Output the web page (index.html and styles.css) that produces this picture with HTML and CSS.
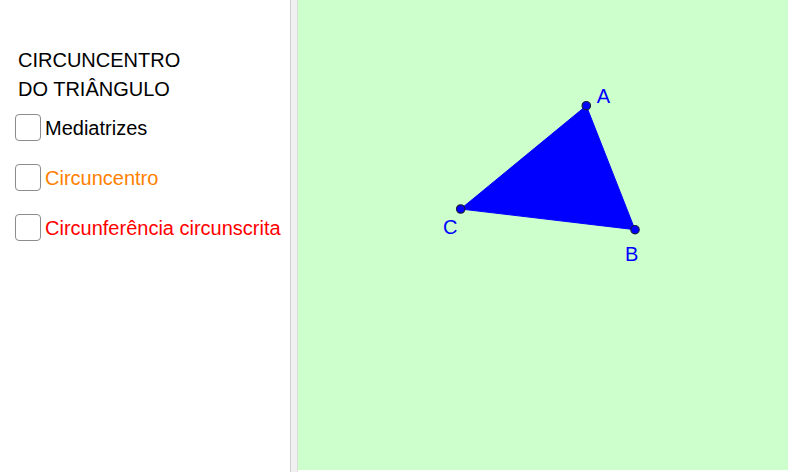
FILE: index.html
```html
<!DOCTYPE html>
<html lang="pt">
<head>
<meta charset="utf-8">
<title>Circuncentro do triângulo</title>
<link rel="stylesheet" href="styles.css">
</head>
<body>
<div class="app">
  <aside class="panel">
    <div class="title">CIRCUNCENTRO<br>DO TRIÂNGULO</div>
    <ul class="options">
      <li class="option"><span class="box"></span><span class="label label-black">Mediatrizes</span></li>
      <li class="option"><span class="box"></span><span class="label label-orange">Circuncentro</span></li>
      <li class="option"><span class="box"></span><span class="label label-red">Circunferência circunscrita</span></li>
    </ul>
  </aside>
  <div class="divider"></div>
  <main class="canvas">
    <svg class="graphics" width="490" height="470" viewBox="0 0 490 470" xmlns="http://www.w3.org/2000/svg">
      <polygon points="288.3,105.7 337,229.7 162.7,209" fill="#0000ff" stroke="#0000ff" stroke-width="1"/>
      <circle cx="288.3" cy="105.7" r="4.2" fill="#0000ff" stroke="#1a1a40" stroke-width="1.2"/>
      <circle cx="337" cy="229.7" r="4.2" fill="#0000ff" stroke="#1a1a40" stroke-width="1.2"/>
      <circle cx="162.7" cy="209" r="4.2" fill="#0000ff" stroke="#1a1a40" stroke-width="1.2"/>
      <text x="298.7" y="103.3" class="pt-label">A</text>
      <text x="327" y="261" class="pt-label">B</text>
      <text x="145" y="234" class="pt-label">C</text>
    </svg>
  </main>
</div>
</body>
</html>
```

FILE: styles.css
```css
html, body {
  margin: 0;
  padding: 0;
  background: #ffffff;
}

body {
  font-family: "Liberation Sans", Arial, sans-serif;
  width: 790px;
  height: 472px;
  overflow: hidden;
}

.app {
  display: flex;
  height: 472px;
}

.panel {
  width: 290px;
  flex: none;
  background: #ffffff;
  padding-top: 45.7px;
  box-sizing: border-box;
}

.title {
  margin-left: 18px;
  font-size: 20px;
  line-height: 29.4px;
  color: #000000;
}

.options {
  list-style: none;
  margin: 9.5px 0 0 0;
  padding: 0;
  display: flex;
  flex-direction: column;
  gap: 23px;
}

.option {
  display: flex;
  align-items: flex-start;
  height: 27px;
  margin-left: 15px;
}

.box {
  width: 26px;
  height: 27px;
  box-sizing: border-box;
  border: 1.5px solid #8c8c8c;
  border-radius: 4px;
  background: #ffffff;
  flex: none;
}

.label {
  margin-left: 4px;
  margin-top: 3.4px;
  font-size: 20px;
  line-height: normal;
  white-space: nowrap;
}

.label-black { color: #000000; }
.label-orange { color: #ff7f00; }
.label-red { color: #ff0000; }

.divider {
  width: 8px;
  flex: none;
  box-sizing: border-box;
  background: #f0f0f0;
  border-left: 1px solid #cfcfcf;
  border-right: 1px solid #dcdcdc;
}

.canvas {
  width: 490px;
  height: 470px;
  flex: none;
  background: #ccffcc;
  overflow: hidden;
}

.graphics {
  display: block;
}

.pt-label {
  font-family: "Liberation Sans", Arial, sans-serif;
  font-size: 20px;
  fill: #0000ff;
}
```
